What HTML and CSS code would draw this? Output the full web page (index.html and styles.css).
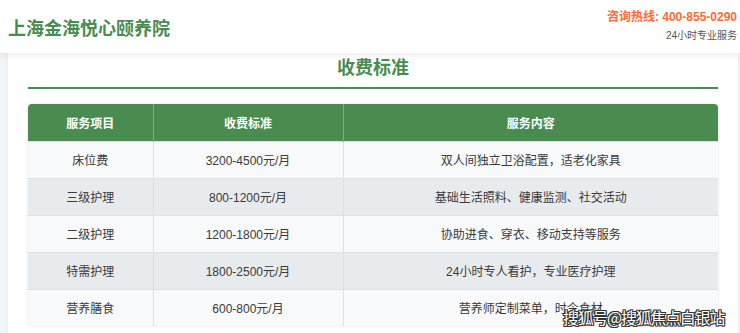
FILE: index.html
```html
<!DOCTYPE html>
<html lang="zh-CN">
<head>
<meta charset="utf-8">
<title>上海金海悦心颐养院</title>
<link rel="stylesheet" href="styles.css">
</head>
<body>
<header class="topbar">
  <div class="brand">上海金海悦心颐养院</div>
  <div class="contact">
    <div class="hotline">咨询热线: 400-855-0290</div>
    <div class="service">24小时专业服务</div>
  </div>
</header>
<main class="page">
  <section class="card">
    <h2 class="section-title">收费标准</h2>
    <div class="table-wrap">
      <table class="fees">
        <thead>
          <tr><th class="c1">服务项目</th><th class="c2">收费标准</th><th class="c3">服务内容</th></tr>
        </thead>
        <tbody>
          <tr><td>床位费</td><td>3200-4500元/月</td><td>双人间独立卫浴配置，适老化家具</td></tr>
          <tr><td>三级护理</td><td>800-1200元/月</td><td>基础生活照料、健康监测、社交活动</td></tr>
          <tr><td>二级护理</td><td>1200-1800元/月</td><td>协助进食、穿衣、移动支持等服务</td></tr>
          <tr><td>特需护理</td><td>1800-2500元/月</td><td>24小时专人看护，专业医疗护理</td></tr>
          <tr><td>营养膳食</td><td>600-800元/月</td><td>营养师定制菜单，时令食材</td></tr>
        </tbody>
      </table>
    </div>
  </section>
</main>
<div class="watermark">搜狐号@搜狐焦点白银站</div>
</body>
</html>
```
FILE: styles.css
```css
html, body {
  margin: 0;
  padding: 0;
}
body {
  width: 740px;
  height: 333px;
  overflow: hidden;
  background: #f3f4f6;
  font-family: "Liberation Sans", "Noto Sans CJK SC", sans-serif;
  color: #333;
  position: relative;
}
.topbar {
  height: 53px;
  background: #fff;
  box-shadow: 0 2px 6px rgba(0,0,0,0.08);
  display: flex;
  justify-content: space-between;
  align-items: center;
  padding: 0 3px 0 8px;
  position: relative;
  z-index: 2;
}
.brand {
  font-size: 18px;
  font-weight: bold;
  color: #4a8c50;
}
.contact {
  text-align: right;
  margin-top: -1px;
}
.hotline {
  font-size: 12px;
  font-weight: bold;
  color: #ff6b35;
  line-height: 18px;
}
.service {
  font-size: 10px;
  color: #555;
  line-height: 16px;
  margin-top: 2px;
}
.page {
  padding: 0 2px 0 8px;
}
.card {
  background: #fff;
  height: 290px;
  padding: 4px 20px 0 20px;
  box-shadow: 0 0 4px rgba(0,0,0,0.06);
}
.section-title {
  margin: 0;
  text-align: center;
  font-size: 18px;
  font-weight: bold;
  color: #4a8c50;
  line-height: 22px;
  padding-bottom: 8px;
  border-bottom: 2px solid #4a8c50;
}
.table-wrap {
  margin-top: 15px;
  border-radius: 4px;
  overflow: hidden;
  box-shadow: 0 0 3px rgba(0,0,0,0.12);
}
.fees {
  width: 100%;
  border-collapse: collapse;
  table-layout: fixed;
  font-size: 12px;
}
.fees .c1 { width: 125px; }
.fees .c2 { width: 190px; }
.fees th {
  background: #4a8c50;
  color: #fff;
  font-weight: bold;
  height: 37px;
  box-sizing: border-box;
  padding: 0;
  border-left: 1px solid #7fb283;
}
.fees th:first-child, .fees td:first-child { border-left: none; }
.fees td {
  height: 37px;
  box-sizing: border-box;
  padding: 0;
  text-align: center;
  color: #3a3a3a;
  border-left: 1px solid #dde1e5;
  border-top: 1px solid #dde1e5;
}
.fees tbody tr:nth-child(odd) td { background: #f8f9fa; }
.fees tbody tr:nth-child(even) td { background: #e8ebee; }
.watermark {
  position: absolute;
  left: 563px;
  top: 306px;
  white-space: nowrap;
  font-size: 16px;
  line-height: 22px;
  font-family: "Noto Sans CJK SC", sans-serif;
  color: #fff;
  letter-spacing: -1.3px;
  text-shadow: -1px -1px 0 #333, 1px -1px 0 #333, -1px 1px 0 #333, 1px 1px 0 #333, 0 1px 0 #333, 1px 0 0 #333, -1px 0 0 #333, 0 -1px 0 #333;
  z-index: 5;
}
```
